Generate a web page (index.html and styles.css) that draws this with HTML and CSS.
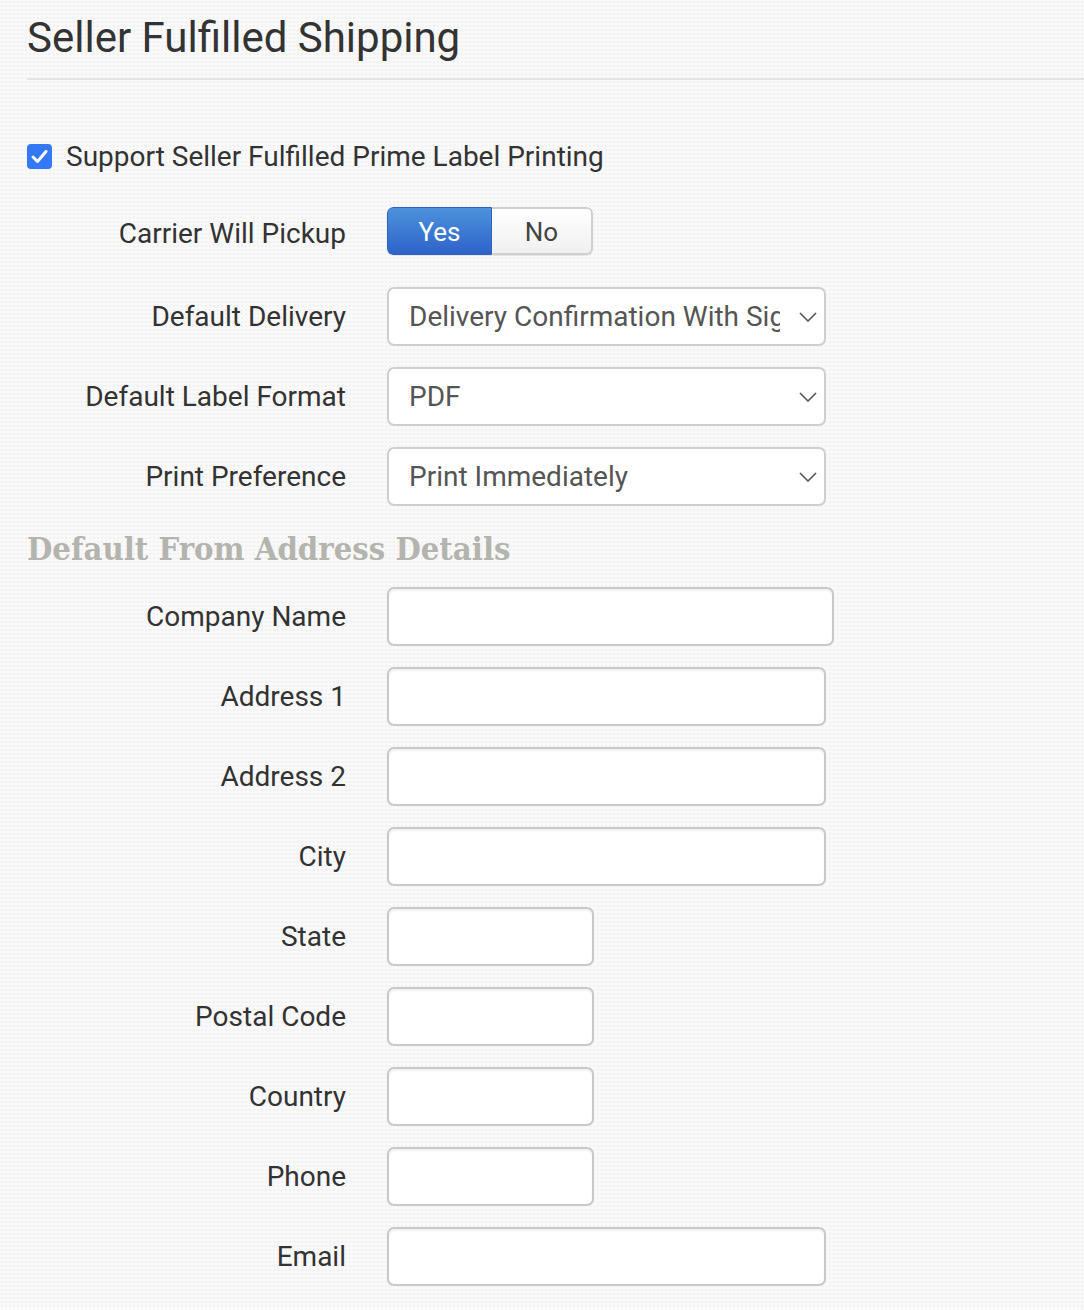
FILE: index.html
```html
<!DOCTYPE html>
<html>
<head>
<meta charset="utf-8">
<link rel="stylesheet" href="styles.css">
</head>
<body>
<div class="page">
  <h1 class="title">Seller Fulfilled Shipping</h1>
  <hr class="rule">
  <label class="check-row">
    <span class="checkbox"><svg viewBox="0 0 25 25" width="25" height="25"><path d="M6 13 L10.5 17.5 L19 7.5" fill="none" stroke="#fff" stroke-width="3" stroke-linecap="round" stroke-linejoin="round"/></svg></span>
    <span class="check-text">Support Seller Fulfilled Prime Label Printing</span>
  </label>

  <div class="form">
    <div class="row row-toggle">
      <div class="label">Carrier Will Pickup</div>
      <div class="toggle">
        <span class="tog tog-on">Yes</span>
        <span class="tog tog-off">No</span>
      </div>
    </div>
    <div class="row">
      <div class="label">Default Delivery</div>
      <div class="select"><span class="select-text">Delivery Confirmation With Signature</span><svg class="chev" viewBox="0 0 18 10" width="18" height="10"><path d="M1 1 L9 9 L17 1" fill="none" stroke="#555" stroke-width="1.6"/></svg></div>
    </div>
    <div class="row">
      <div class="label">Default Label Format</div>
      <div class="select"><span class="select-text">PDF</span><svg class="chev" viewBox="0 0 18 10" width="18" height="10"><path d="M1 1 L9 9 L17 1" fill="none" stroke="#555" stroke-width="1.6"/></svg></div>
    </div>
    <div class="row">
      <div class="label">Print Preference</div>
      <div class="select"><span class="select-text">Print Immediately</span><svg class="chev" viewBox="0 0 18 10" width="18" height="10"><path d="M1 1 L9 9 L17 1" fill="none" stroke="#555" stroke-width="1.6"/></svg></div>
    </div>
  </div>

  <h2 class="section">Default From Address Details</h2>

  <div class="form">
    <div class="row"><div class="label">Company Name</div><div class="input input-xl"></div></div>
    <div class="row"><div class="label">Address 1</div><div class="input input-lg"></div></div>
    <div class="row"><div class="label">Address 2</div><div class="input input-lg"></div></div>
    <div class="row"><div class="label">City</div><div class="input input-lg"></div></div>
    <div class="row"><div class="label">State</div><div class="input input-sm"></div></div>
    <div class="row"><div class="label">Postal Code</div><div class="input input-sm"></div></div>
    <div class="row"><div class="label">Country</div><div class="input input-sm"></div></div>
    <div class="row"><div class="label">Phone</div><div class="input input-sm"></div></div>
    <div class="row"><div class="label">Email</div><div class="input input-lg"></div></div>
  </div>
</div>
</body>
</html>
```

FILE: styles.css
```css
html, body {
  margin: 0;
  padding: 0;
}
body {
  background-color: #f9f9f9;
  background-image: radial-gradient(circle, #f1f1f1 0.8px, transparent 1.2px);
  background-size: 4px 4px;
  font-family: Roboto, "Liberation Sans", sans-serif;
  color: #333;
  height: 1310px;
  overflow: hidden;
}
.page {
  padding-left: 27px;
}
.title {
  margin: 0;
  padding-top: 12px;
  font-size: 42px;
  font-weight: 400;
  line-height: 52px;
  color: #333;
}
.rule {
  margin: 14px 0 0 0;
  border: 0;
  height: 2px;
  background: #e4e4e4;
}
.check-row {
  display: flex;
  align-items: center;
  gap: 14px;
  margin-top: 64px;
  height: 25px;
}
.checkbox {
  width: 25px;
  height: 25px;
  border-radius: 4px;
  background: #3478f6;
  display: flex;
}
.check-text {
  font-size: 28px;
  color: #333;
}
.form {
  display: flex;
  flex-direction: column;
  gap: 22px;
}
.check-row + .form {
  margin-top: 38px;
}
.row {
  display: grid;
  grid-template-columns: 319px auto;
  column-gap: 41px;
  align-items: center;
  height: 58px;
}
.row-toggle {
  height: 48px;
  margin-bottom: 10px;
}
.label {
  text-align: right;
  font-size: 28px;
  color: #333;
  white-space: nowrap;
}
.row-toggle .label {
  padding-top: 4px;
}
.toggle {
  display: flex;
  width: 206px;
  height: 48px;
  border-radius: 6px;
  overflow: hidden;
  box-shadow: 0 1px 1px rgba(0,0,0,0.08);
}
.tog {
  display: flex;
  align-items: center;
  justify-content: center;
  font-size: 26px;
  box-sizing: border-box;
  padding-top: 2px;
}
.tog-on {
  width: 105px;
  color: #fff;
  background: linear-gradient(#4b93dc, #2f62c9);
  border: 1px solid #2e62c2;
  border-radius: 6px 0 0 6px;
}
.tog-off {
  width: 101px;
  color: #444;
  background: linear-gradient(#ffffff, #f0f0f0);
  border: 2px solid #d0d0d0;
  border-left: 0;
  border-radius: 0 6px 6px 0;
}
.select {
  box-sizing: border-box;
  width: 439px;
  height: 59px;
  border: 2px solid #cfcfcf;
  border-radius: 7px;
  background: #fff;
  display: flex;
  align-items: center;
  padding: 0 7px 0 20px;
}
.select-text {
  flex: 1;
  font-size: 28px;
  color: #555;
  white-space: nowrap;
  overflow: hidden;
}
.chev {
  margin-left: 19px;
  flex: none;
}
.section {
  margin: 24px 0 18px 0;
  font-family: "DejaVu Serif Condensed", "DejaVu Serif", serif;
  font-stretch: condensed;
  font-weight: 700;
  font-size: 32.5px;
  line-height: 40px;
  color: #b4b4af;
}
.input {
  box-sizing: border-box;
  height: 59px;
  border: 2px solid #c9c9c9;
  border-radius: 7px;
  background: #fff;
  box-shadow: inset 0 2px 2px rgba(0,0,0,0.06);
}
.input-xl { width: 447px; }
.input-lg { width: 439px; }
.input-sm { width: 207px; }
```
